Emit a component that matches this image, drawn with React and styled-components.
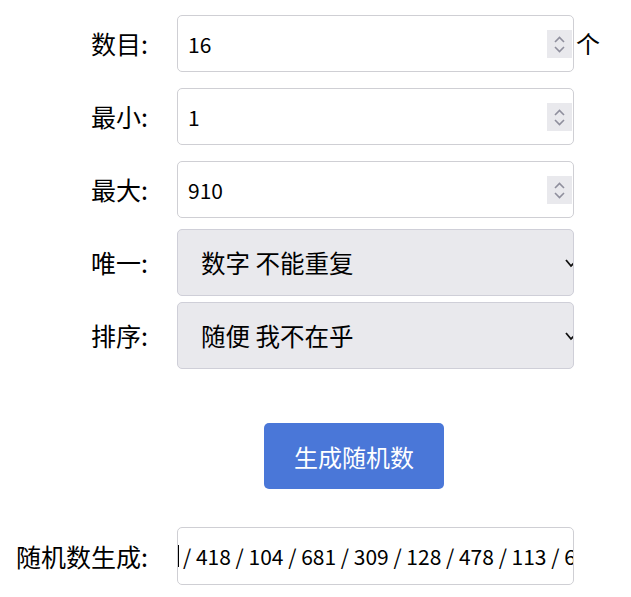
import styled, { createGlobalStyle } from 'styled-components';

const GlobalStyle = createGlobalStyle`
  html, body {
    margin: 0;
    padding: 0;
    background: #fff;
  }
  body {
    font-family: "Noto Sans CJK SC", "Noto Sans", sans-serif;
    color: #000;
  }
`;

const Page = styled.div`
  display: flex;
  flex-direction: column;
  padding: 15px 0 0 14px;
`;

const Row = styled.div`
  display: flex;
  align-items: center;
  gap: 29px;
  margin-top: ${(p) => p.$mt || 0}px;
`;

const Label = styled.div`
  width: 134px;
  flex-shrink: 0;
  text-align: right;
  font-size: 25px;
  line-height: 1;
  white-space: nowrap;
`;

const FieldWrap = styled.div`
  position: relative;
  width: 397px;
  height: ${(p) => p.$h}px;
  flex-shrink: 0;
`;

const TextBox = styled.div`
  box-sizing: border-box;
  width: 100%;
  height: 100%;
  border: 1px solid #cfcfd4;
  border-radius: 5px;
  background: #fff;
  display: flex;
  align-items: center;
  padding-left: ${(p) => (p.$flush ? 0 : 10)}px;
  font-size: 21px;
  overflow: hidden;
  white-space: nowrap;
`;

const Spinner = styled.div`
  position: absolute;
  right: 2px;
  top: 15px;
  width: 25px;
  height: 28px;
  background: #e9e9ed;
  display: flex;
  flex-direction: column;
  align-items: center;
  justify-content: center;
  gap: 3px;
`;

const Unit = styled.span`
  position: absolute;
  left: 100%;
  top: 50%;
  transform: translate(2px, -54%);
  font-size: 24px;
`;

const SelectBox = styled.div`
  box-sizing: border-box;
  position: relative;
  width: 100%;
  height: 100%;
  border: 1px solid #cfcfd8;
  border-radius: 5px;
  background: #e9e9ed;
  display: flex;
  align-items: center;
  padding-left: 23px;
  font-size: 24.5px;
  overflow: hidden;
`;

const Arrow = styled.svg`
  position: absolute;
  right: -2px;
  top: 50%;
  margin-top: -4px;
`;

const ButtonRow = styled.div`
  display: flex;
  padding-left: 250px;
  margin-top: 54px;
`;

const Button = styled.button`
  width: 180px;
  height: 66px;
  border: none;
  border-radius: 5px;
  background: #4a77d8;
  color: #fff;
  font-family: inherit;
  font-size: 24px;
  padding: 0;
  cursor: pointer;
`;

const Caret = styled.span`
  display: inline-block;
  width: 1px;
  height: 22px;
  background: #000;
  margin-right: 4px;
  flex-shrink: 0;
`;

const ResultText = styled.span`
  font-size: 21px;
`;

function Chevron({ up }) {
  return (
    <svg width="11" height="7" viewBox="0 0 11 7">
      <path
        d={up ? 'M1 6 L5.5 1.5 L10 6' : 'M1 1 L5.5 5.5 L10 1'}
        fill="none"
        stroke="#8f8f9d"
        strokeWidth="1.6"
      />
    </svg>
  );
}

function NumberField({ value, unit }) {
  return (
    <FieldWrap $h={57}>
      <TextBox>{value}</TextBox>
      <Spinner>
        <Chevron up />
        <Chevron />
      </Spinner>
      {unit && <Unit>{unit}</Unit>}
    </FieldWrap>
  );
}

function SelectField({ value }) {
  return (
    <FieldWrap $h={67}>
      <SelectBox>
        {value}
        <Arrow width="10" height="9" viewBox="0 0 10 9">
          <path d="M1 1 L6 7 L10 3" fill="none" stroke="#111" strokeWidth="1.8" />
        </Arrow>
      </SelectBox>
    </FieldWrap>
  );
}

export default function App() {
  return (
    <>
      <GlobalStyle />
      <Page>
        <Row>
          <Label>数目:</Label>
          <NumberField value="16" unit="个" />
        </Row>
        <Row $mt={16}>
          <Label>最小:</Label>
          <NumberField value="1" />
        </Row>
        <Row $mt={16}>
          <Label>最大:</Label>
          <NumberField value="910" />
        </Row>
        <Row $mt={11}>
          <Label>唯一:</Label>
          <SelectField value="数字 不能重复" />
        </Row>
        <Row $mt={6}>
          <Label>排序:</Label>
          <SelectField value="随便 我不在乎" />
        </Row>
        <ButtonRow>
          <Button>生成随机数</Button>
        </ButtonRow>
        <Row $mt={38}>
          <Label>随机数生成:</Label>
          <FieldWrap $h={58}>
            <TextBox $flush>
              <Caret />
              <ResultText>/ 418 / 104 / 681 / 309 / 128 / 478 / 113 / 681 / 309</ResultText>
            </TextBox>
          </FieldWrap>
        </Row>
      </Page>
    </>
  );
}
